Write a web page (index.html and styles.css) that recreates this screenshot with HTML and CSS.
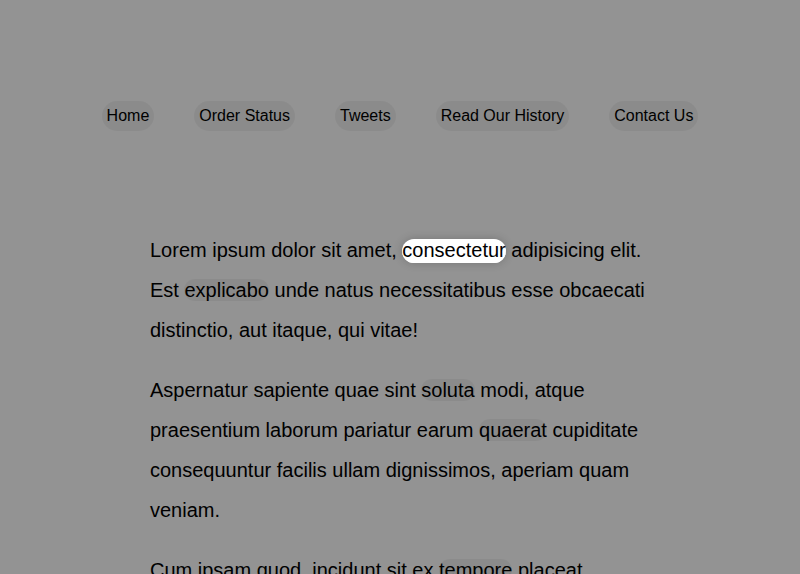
FILE: index.html
```html
<!DOCTYPE html>
<html>
<head>
<meta charset="utf-8">
<link rel="stylesheet" href="styles.css">
</head>
<body>
<nav>
  <ul class="menu">
    <li><a href="#">Home</a></li>
    <li><a href="#">Order Status</a></li>
    <li><a href="#">Tweets</a></li>
    <li><a href="#">Read Our History</a></li>
    <li><a href="#">Contact Us</a></li>
  </ul>
</nav>
<div class="wrapper">
  <p>Lorem ipsum dolor sit amet, <a href="#" class="lit">consectetur</a> adipisicing elit. Est <a href="#">explicabo</a> unde natus necessitatibus esse obcaecati distinctio, aut itaque, qui vitae!</p>
  <p>Aspernatur sapiente quae sint <a href="#">soluta</a> modi, atque praesentium laborum pariatur earum <a href="#">quaerat</a> cupiditate consequuntur facilis ullam dignissimos, aperiam quam veniam.</p>
  <p>Cum ipsam quod, incidunt sit ex <a href="#">tempore</a> placeat maxime corrupti possimus <a href="#">veritatis</a> ipsum fugit recusandae est doloremque? Hic, quibusdam, nulla.</p>
</div>
</body>
</html>
```
FILE: styles.css
```css
html, body {
  margin: 0;
  background: #939393;
}
body {
  font-family: "Liberation Sans", Arial, sans-serif;
  color: #000;
  padding-top: 101px;
}
.menu {
  list-style: none;
  margin: 0;
  padding: 0;
  display: flex;
  justify-content: center;
}
.menu a {
  display: inline-block;
  padding: 6px 5px;
  margin: 0 20px;
  font-size: 16px;
}
a {
  color: #000;
  text-decoration: none;
  background: rgba(0, 0, 0, 0.05);
  border-radius: 20px;
}
a.lit {
  background: #fff;
  border-bottom: 2px solid #fff;
  box-shadow: 0 0 10px rgba(0, 0, 0, 0.2);
}
.wrapper {
  max-width: 500px;
  margin: 99px auto 0;
  font-size: 20px;
  line-height: 2;
}
.wrapper p {
  margin: 0 0 20px;
}
```
